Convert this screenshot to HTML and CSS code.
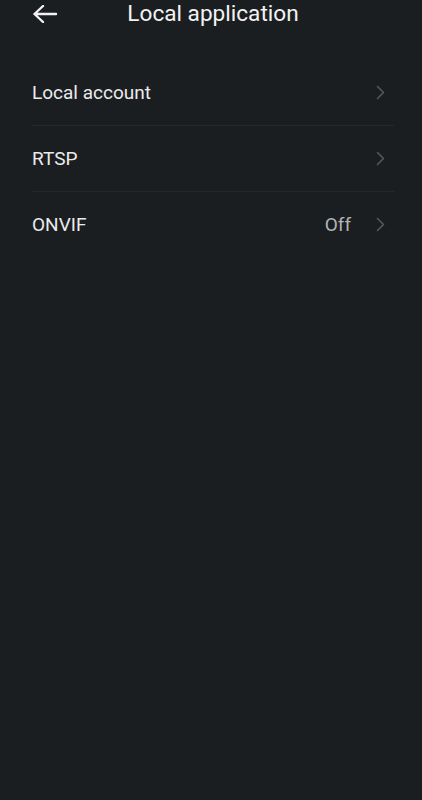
FILE: index.html
```html
<!DOCTYPE html>
<html lang="en">
<head>
<meta charset="utf-8">
<title>Local application</title>
<link rel="stylesheet" href="styles.css">
</head>
<body>
<div class="screen">
  <header class="topbar">
    <div class="back">
      <svg width="26" height="18" viewBox="0 0 26 18" aria-hidden="true">
        <path d="M24 9H2.5M11 1L2.5 9L11 17" fill="none" stroke="#f2f2f2" stroke-width="2.4" stroke-linecap="round" stroke-linejoin="round"/>
      </svg>
    </div>
    <h1 class="title">Local application</h1>
    <div></div>
  </header>
  <ul class="list">
    <li class="row">
      <span class="label">Local account</span>
      <span class="chev"><svg width="9" height="15" viewBox="0 0 9 15"><path d="M1.5 1.5L7.5 7.5L1.5 13.5" fill="none" stroke="#54575b" stroke-width="1.6" stroke-linecap="round" stroke-linejoin="round"/></svg></span>
    </li>
    <li class="row">
      <span class="label">RTSP</span>
      <span class="chev"><svg width="9" height="15" viewBox="0 0 9 15"><path d="M1.5 1.5L7.5 7.5L1.5 13.5" fill="none" stroke="#54575b" stroke-width="1.6" stroke-linecap="round" stroke-linejoin="round"/></svg></span>
    </li>
    <li class="row">
      <span class="label">ONVIF</span>
      <span class="value">Off</span>
      <span class="chev"><svg width="9" height="15" viewBox="0 0 9 15"><path d="M1.5 1.5L7.5 7.5L1.5 13.5" fill="none" stroke="#54575b" stroke-width="1.6" stroke-linecap="round" stroke-linejoin="round"/></svg></span>
    </li>
  </ul>
</div>
</body>
</html>
```
FILE: styles.css
```css
html, body {
  margin: 0;
  padding: 0;
  background: #1b1e21;
  height: 100%;
}
body {
  font-family: Roboto, "Noto Sans", "Liberation Sans", sans-serif;
  color: #ebebeb;
}
.screen {
  min-height: 800px;
  background: #1b1e21;
}
.topbar {
  display: grid;
  grid-template-columns: 1fr auto 1fr;
  align-items: center;
  height: 28px;
}
.back {
  padding-left: 32px;
  display: flex;
  align-items: center;
}
.back svg { display: block; }
.title {
  margin: 0 0 0 4px;
  font-size: 22.6px;
  font-weight: 400;
  color: #f2f2f2;
  line-height: 28px;
}
.list {
  list-style: none;
  margin: 32px 0 0 0;
  padding: 0 28px 0 32px;
}
.row {
  display: flex;
  align-items: center;
  height: 65px;
  border-bottom: 1px solid #26292c;
  font-size: 19px;
}
.row:last-child { border-bottom: none; }
.label {
  flex: 1;
  color: #ebebeb;
}
.value {
  color: #b2b4b6;
  margin-right: 25px;
}
.chev {
  display: flex;
  align-items: center;
  padding-right: 9px;
}
.chev svg { display: block; }
```
